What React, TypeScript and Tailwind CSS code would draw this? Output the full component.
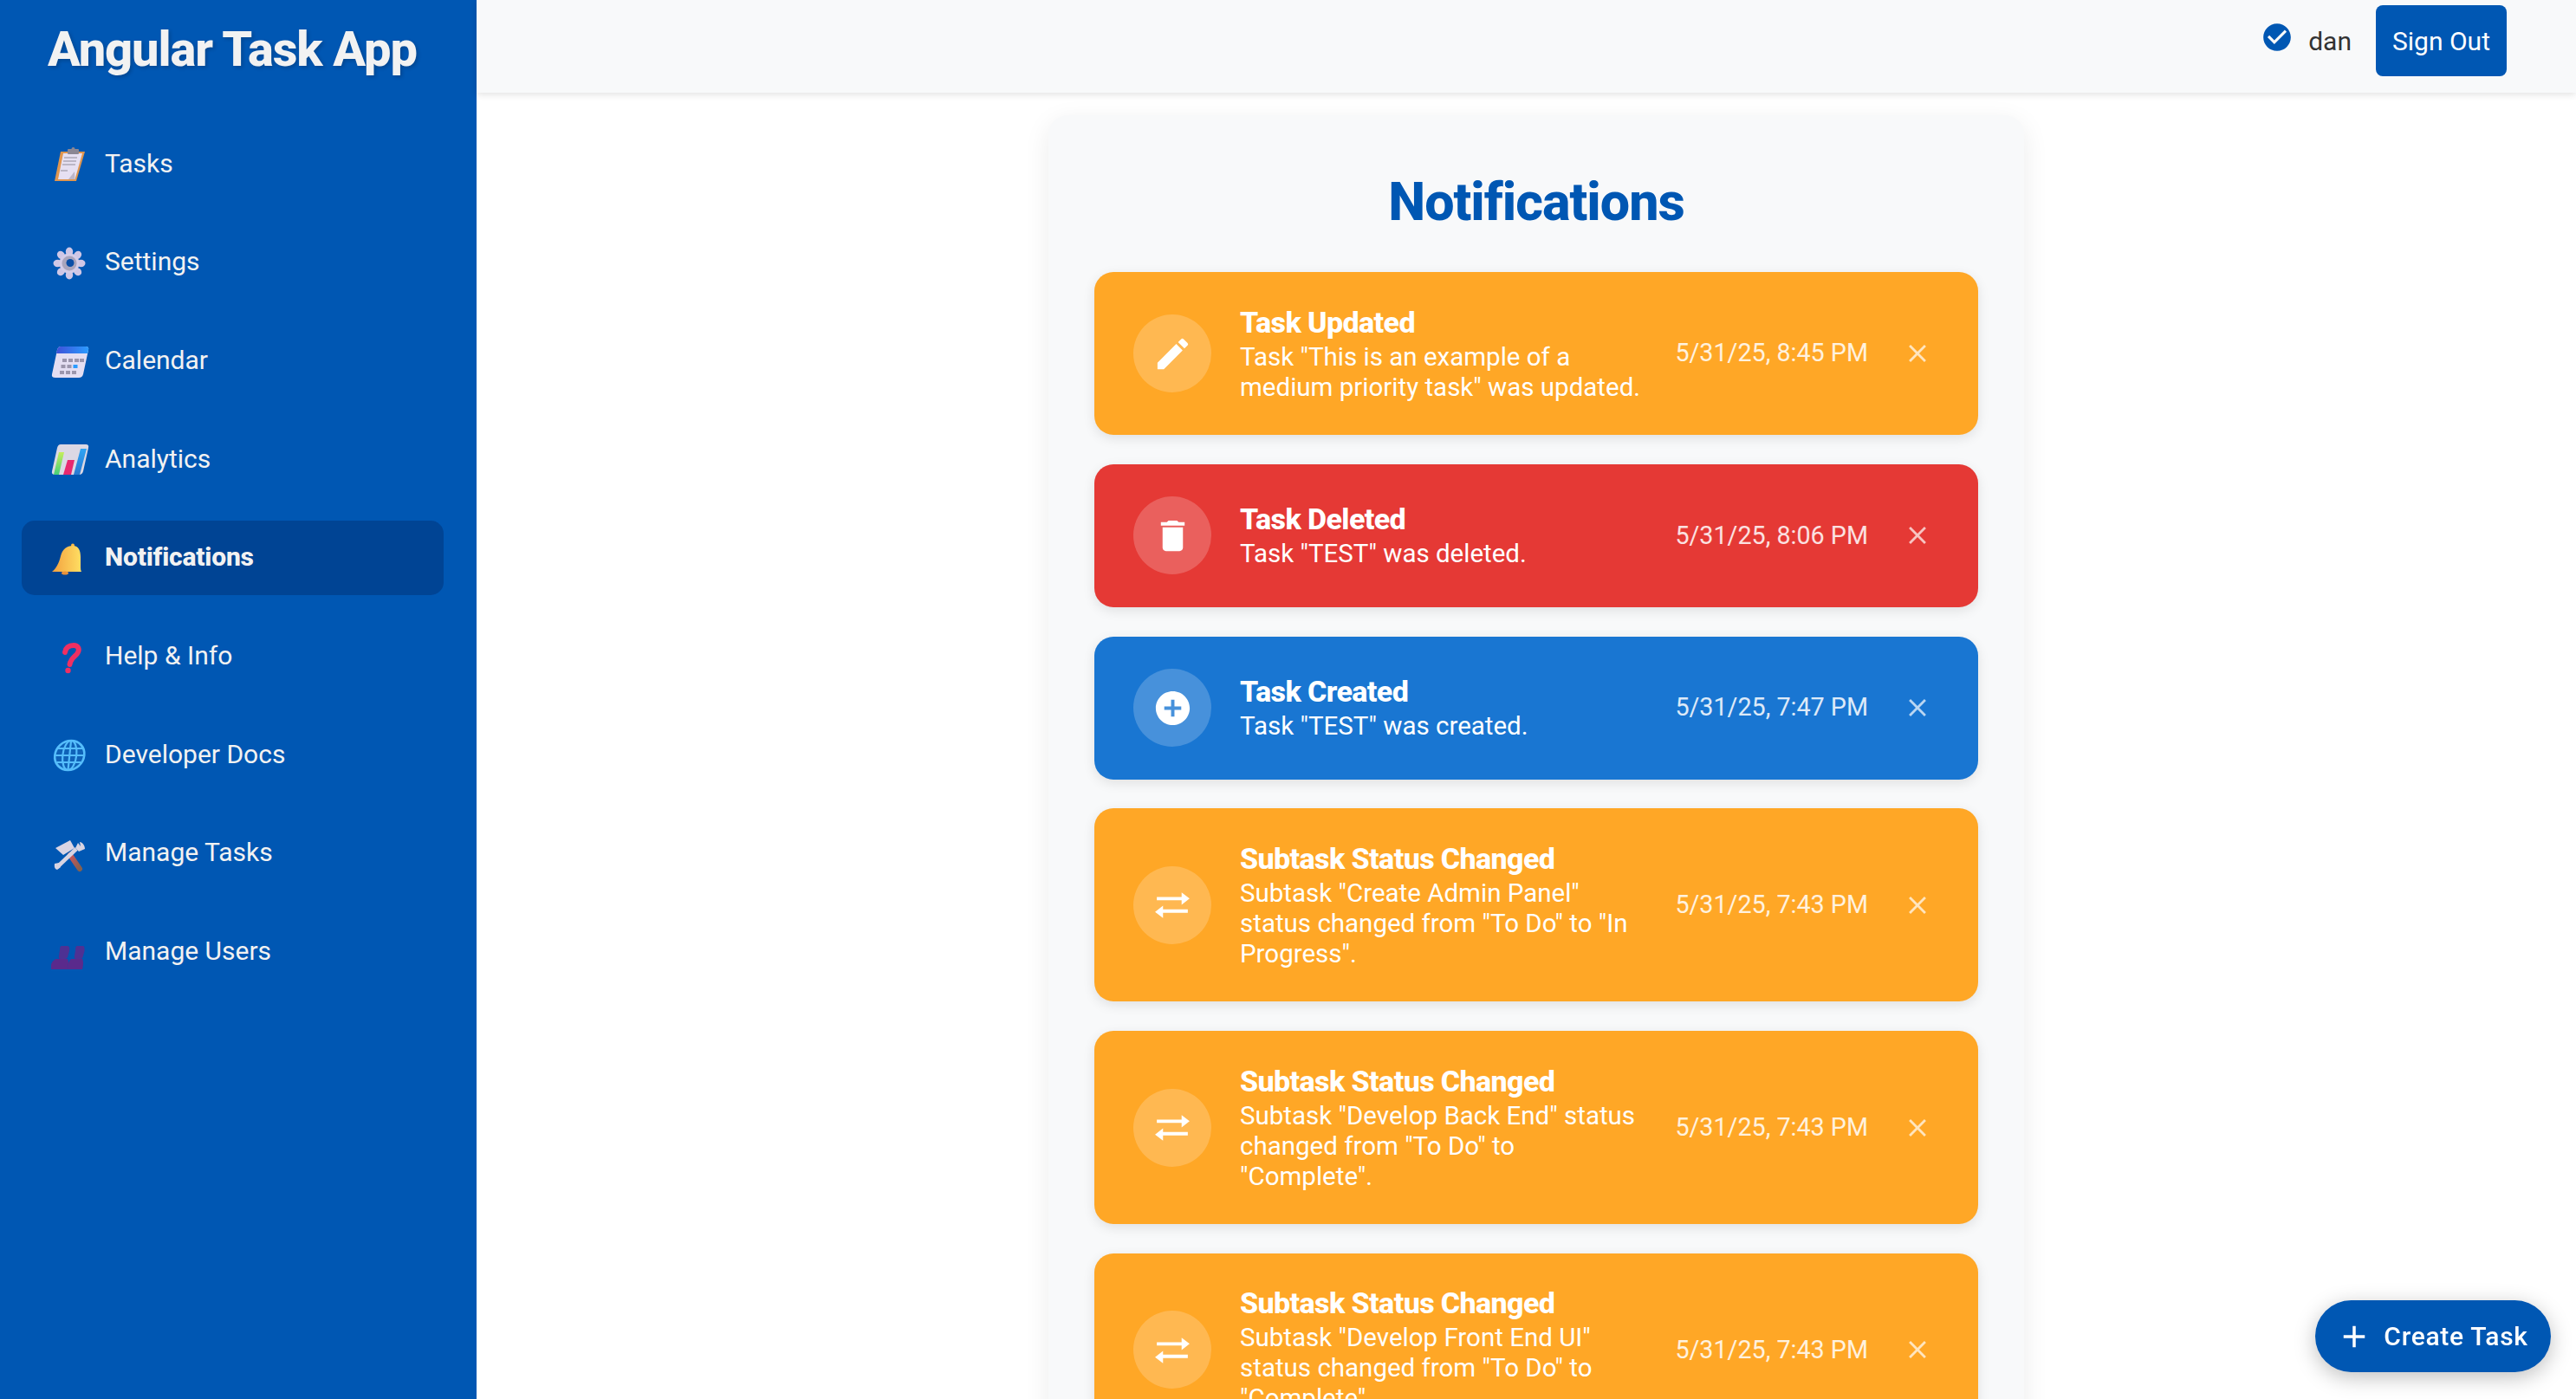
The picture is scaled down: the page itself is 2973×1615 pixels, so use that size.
import type { ReactNode, SVGProps } from 'react';
import { MdAdd, MdAddCircle, MdCheckCircle, MdClose, MdDelete, MdEdit } from 'react-icons/md';

function SwapIcon(props: SVGProps<SVGSVGElement>) {
  return (
    <svg viewBox="-4 -9 46 46" fill="currentColor" {...props}>
      <path d="M1 5.200H29V0L38 7L29 14V8.800H1Z" />
      <path d="M36 19.200H8V15L-1 22L8 29V23H36Z" />
    </svg>
  );
}

function TasksIcon() {
  return (
    <svg viewBox="0 0 50 50" className="w-[50px] h-[50px]">
      <path d="M11 11H39L29 45H4Z" fill="#e0964f" />
      <path d="M14 13H36L27.500 43H8Z" fill="#e6e0f2" />
      <path d="M15 18H30M14 22H29M13 26H28M11 33H19" stroke="#8f8b99" strokeWidth="1.200" />
      <path d="M20 43L27 34L27.500 43Z" fill="#bdb6c9" />
      <rect x="19" y="8" width="13" height="6" rx="1" fill="#8b8794" />
      <circle cx="25.500" cy="8" r="2" fill="#8b8794" />
    </svg>
  );
}

function SettingsIcon() {
  const angles = [0, 45, 90, 135, 180, 225, 270, 315];
  return (
    <svg viewBox="0 0 50 50" className="w-[50px] h-[50px]">
      {angles.map((a) => (
        <ellipse key={a} cx="21" cy="12.500" rx="4.200" ry="5" fill="#cfc7e6" transform={`rotate(${a} 21 26)`} />
      ))}
      <circle cx="21" cy="26" r="11.500" fill="#d4cde8" />
      <circle cx="21" cy="26" r="8.500" fill="#a9a5bd" />
      <circle cx="22" cy="25.500" r="4.500" fill="#0a4ea6" />
    </svg>
  );
}

function CalendarIcon() {
  const cells = [
    [13, 23], [20, 23], [27, 23],
    [11.500, 30], [18.500, 30], [33, 23],
    [10, 37], [17, 37], [24, 37],
  ];
  return (
    <svg viewBox="0 0 50 50" className="w-[50px] h-[50px]">
      <defs>
        <linearGradient id="calTop" x1="0" x2="1" y1="0" y2="0">
          <stop offset="0" stopColor="#3f51d8" />
          <stop offset="1" stopColor="#2b9bff" />
        </linearGradient>
      </defs>
      <path d="M11 9H40Q44 9 43 13L37 41Q36 45 32 45H5Q0 45 1 41L7 13Q8 9 11 9Z" fill="#e4def2" />
      <path d="M11 9H40Q44 9 43 13L42 17H6L7 13Q8 9 11 9Z" fill="url(#calTop)" />
      {cells.map(([x, y]) => (
        <rect key={`${x}-${y}`} x={x} y={y} width="5" height="4" fill="#9c96ad" />
      ))}
      <rect x="25.500" y="30" width="5" height="4" fill="#2b9bff" />
    </svg>
  );
}

function AnalyticsIcon() {
  return (
    <svg viewBox="0 0 50 50" className="w-[50px] h-[50px]">
      <defs>
        <linearGradient id="barGreen" x1="0" x2="0" y1="0" y2="1">
          <stop offset="0" stopColor="#c6ee5a" />
          <stop offset="1" stopColor="#45cf7a" />
        </linearGradient>
        <linearGradient id="barBlue" x1="0" x2="0" y1="0" y2="1">
          <stop offset="0" stopColor="#2fa4f5" />
          <stop offset="1" stopColor="#2a78d0" />
        </linearGradient>
      </defs>
      <path d="M11 8H40Q44 8 43 12L37 39Q36 43 32 43H5Q0 43 1 39L7 12Q8 8 11 8Z" fill="#dcd8e4" />
      <path d="M9 17L3 43H9L15 17Z" fill="url(#barGreen)" />
      <path d="M19 26L14 43H23L27 26Z" fill="#e8286f" />
      <path d="M34 13L26 43H33L41 13Z" fill="url(#barBlue)" />
    </svg>
  );
}

function BellIcon() {
  return (
    <svg viewBox="0 0 50 50" className="w-[50px] h-[50px]">
      <defs>
        <linearGradient id="bell" x1="0" x2="1" y1="0" y2="0">
          <stop offset="0" stopColor="#f2a03f" />
          <stop offset="1" stopColor="#ffdf63" />
        </linearGradient>
      </defs>
      <circle cx="25" cy="10.500" r="2" fill="#f8bb49" />
      <path d="M25 11C32 11 34 17 34 24V36Q34 40 35 41H1C6 37 9 31 11 23C13 15 18 11 25 11Z" fill="url(#bell)" />
      <ellipse cx="16" cy="42.500" rx="4" ry="2" fill="#e8923c" />
    </svg>
  );
}

function HelpIcon() {
  return (
    <svg viewBox="0 0 50 50" className="w-[50px] h-[50px]">
      <path d="M16 21C17 15 21 13 26 13C31 13 33 17 31 21C29 26 23 26 21.500 35" fill="none" stroke="#ef2f62" strokeWidth="6" strokeLinecap="round" />
      <circle cx="19.500" cy="42" r="3.200" fill="#ef2f62" />
    </svg>
  );
}

function DocsIcon() {
  return (
    <svg viewBox="0 0 50 50" className="w-[50px] h-[50px]">
      <g transform="skewX(-6) translate(3 0)">
        <circle cx="21" cy="26" r="17" fill="#0f62b8" stroke="#55bdfb" strokeWidth="2.600" />
        <ellipse cx="21" cy="26" rx="8" ry="17" fill="none" stroke="#55bdfb" strokeWidth="2.200" />
        <path d="M21 9V43M7 18H35M4 26H38M7 34H35" stroke="#55bdfb" strokeWidth="2.200" />
      </g>
    </svg>
  );
}

function ManageTasksIcon() {
  return (
    <svg viewBox="0 0 50 50" className="w-[50px] h-[50px]">
      <defs>
        <linearGradient id="handle" x1="0" x2="1" y1="0" y2="1">
          <stop offset="0" stopColor="#c9565e" />
          <stop offset="1" stopColor="#85604f" />
        </linearGradient>
      </defs>
      <path d="M22 27L33 43" stroke="url(#handle)" strokeWidth="6" strokeLinecap="round" />
      <path d="M5 19L22 10L27 19L14 27Z" fill="#d9d4e4" />
      <path d="M7 41L29 20" stroke="#d8d4e2" strokeWidth="4.500" />
      <path d="M31 13L28 19L32 23L39 20C39 16 36 12 33 12L34 17Z" fill="#d8d4e2" />
      <path d="M4 37L9 36L11 41L7 44Q3 43 4 37Z" fill="#d8d4e2" />
    </svg>
  );
}

function ManageUsersIcon() {
  return (
    <svg viewBox="0 0 50 50" className="w-[50px] h-[50px]">
      <path d="M12 18H19Q22 18 21 24L19 31Q18 33 16 33H11Q8 33 9 29L10 23Q10 18 12 18Z" fill="#4e3193" />
      <path d="M30 18H37Q39 18 38.500 24L36.500 31Q36 33 34 33H29Q26 33 27 29L28 23Q28 18 30 18Z" fill="#4e3193" />
      <path d="M5 33H19Q21 36 19 45H-1Q-1 37 5 33Z" fill="#5a2a8c" />
      <path d="M23 33H36Q38 36 36 45H19Q19 37 23 33Z" fill="#5a2a8c" />
    </svg>
  );
}

const navItems: { label: string; icon: ReactNode; active?: boolean }[] = [
  { label: 'Tasks', icon: <TasksIcon /> },
  { label: 'Settings', icon: <SettingsIcon /> },
  { label: 'Calendar', icon: <CalendarIcon /> },
  { label: 'Analytics', icon: <AnalyticsIcon /> },
  { label: 'Notifications', icon: <BellIcon />, active: true },
  { label: 'Help & Info', icon: <HelpIcon /> },
  { label: 'Developer Docs', icon: <DocsIcon /> },
  { label: 'Manage Tasks', icon: <ManageTasksIcon /> },
  { label: 'Manage Users', icon: <ManageUsersIcon /> },
];

const notifications = [
  {
    title: 'Task Updated',
    body: 'Task "This is an example of a medium priority task" was updated.',
    time: '5/31/25, 8:45 PM',
    color: 'bg-[#ffa726]',
    Icon: MdEdit,
  },
  {
    title: 'Task Deleted',
    body: 'Task "TEST" was deleted.',
    time: '5/31/25, 8:06 PM',
    color: 'bg-[#e53935]',
    Icon: MdDelete,
  },
  {
    title: 'Task Created',
    body: 'Task "TEST" was created.',
    time: '5/31/25, 7:47 PM',
    color: 'bg-[#1976d2]',
    Icon: MdAddCircle,
  },
  {
    title: 'Subtask Status Changed',
    body: 'Subtask "Create Admin Panel" status changed from "To Do" to "In Progress".',
    time: '5/31/25, 7:43 PM',
    color: 'bg-[#ffa726]',
    Icon: SwapIcon,
  },
  {
    title: 'Subtask Status Changed',
    body: 'Subtask "Develop Back End" status changed from "To Do" to "Complete".',
    time: '5/31/25, 7:43 PM',
    color: 'bg-[#ffa726]',
    Icon: SwapIcon,
  },
  {
    title: 'Subtask Status Changed',
    body: 'Subtask "Develop Front End UI" status changed from "To Do" to "Complete".',
    time: '5/31/25, 7:43 PM',
    color: 'bg-[#ffa726]',
    Icon: SwapIcon,
  },
];

export default function App() {
  return (
    <div className="flex h-screen overflow-hidden bg-white font-['Roboto',sans-serif]">
      <aside className="w-[550px] shrink-0 bg-[#0057b3] flex flex-col pl-[25px] pr-[38px]">
        <h1 className="h-[116px] pt-[24px] pl-[30px] text-[56px] leading-[66px] font-extrabold tracking-[-1.1px] whitespace-nowrap text-[#f2f2f2] [text-shadow:2px_2px_4px_rgba(0,0,0,0.2)]">
          Angular Task App
        </h1>
        <nav className="flex flex-col gap-[27.7px] pt-[30px]">
          {navItems.map((item) => (
            <div
              key={item.label}
              className={`h-[86px] flex items-center gap-[12px] pl-[34px] rounded-[15px] text-[30px] text-[#f2f2f2] ${
                item.active ? 'bg-[#004494] font-extrabold tracking-[-0.2px]' : ''
              }`}
            >
              {item.icon}
              <span className="pb-[2px]">{item.label}</span>
            </div>
          ))}
        </nav>
      </aside>

      <main className="flex-1 min-w-0 flex flex-col">
        <header className="h-[107px] shrink-0 bg-[#f8f9fa] shadow-[0_2px_8px_rgba(0,0,0,0.12)] flex items-center justify-end pt-[6px] pb-[19px] pr-[80px]">
          <MdCheckCircle className="w-[38px] h-[38px] text-[#0057b3] mb-[8px]" />
          <span className="ml-[17px] text-[30px] text-[#333333]">dan</span>
          <button className="ml-[28px] w-[151px] h-[82px] rounded-[8px] bg-[#0057b3] text-[30px] text-white">
            Sign Out
          </button>
        </header>

        <div className="flex justify-center pl-[23px] pt-[26px]">
          <section className="w-[1126px] rounded-[22px] bg-[#f8f9fa] shadow-[0_8px_30px_rgba(0,0,0,0.08)] px-[53px] pt-[65px] pb-[60px]">
            <h2 className="h-[70px] mb-[46px] text-center text-[61px] leading-[70px] font-extrabold tracking-[-1px] text-[#0057b3]">
              Notifications
            </h2>
            <div className="flex flex-col gap-[33.75px]">
              {notifications.map((n, idx) => (
                <div
                  key={idx}
                  className={`${n.color} min-h-[165px] rounded-[22px] shadow-[0_4px_14px_rgba(0,0,0,0.1)] flex items-center pl-[45px] pr-[53px] py-[37.5px] text-white`}
                >
                  <div className="w-[90px] h-[90px] shrink-0 rounded-full bg-white/20 flex items-center justify-center">
                    <n.Icon className="w-[47px] h-[47px]" />
                  </div>
                  <div className="ml-[33px] flex-1 min-w-0">
                    <div className="text-[34px] leading-[41px] pb-[2px] font-extrabold tracking-[-0.6px]">{n.title}</div>
                    <div className="text-[29.5px] leading-[35px]">{n.body}</div>
                  </div>
                  <div className="ml-[38px] shrink-0 text-[28.7px] text-white/85">{n.time}</div>
                  <MdClose className="ml-[40px] w-[34px] h-[34px] shrink-0 text-white/70" />
                </div>
              ))}
            </div>
          </section>
        </div>
      </main>

      <button className="fixed left-[2672px] top-[1501px] w-[272px] h-[83px] rounded-full bg-[#0057b3] text-white text-[30px] font-medium tracking-[0.7px] flex items-center justify-center gap-[13px] pr-[2px] shadow-[0_6px_24px_rgba(0,0,0,0.25)]">
        <MdAdd className="w-[42px] h-[42px]" />
        Create Task
      </button>
    </div>
  );
}
